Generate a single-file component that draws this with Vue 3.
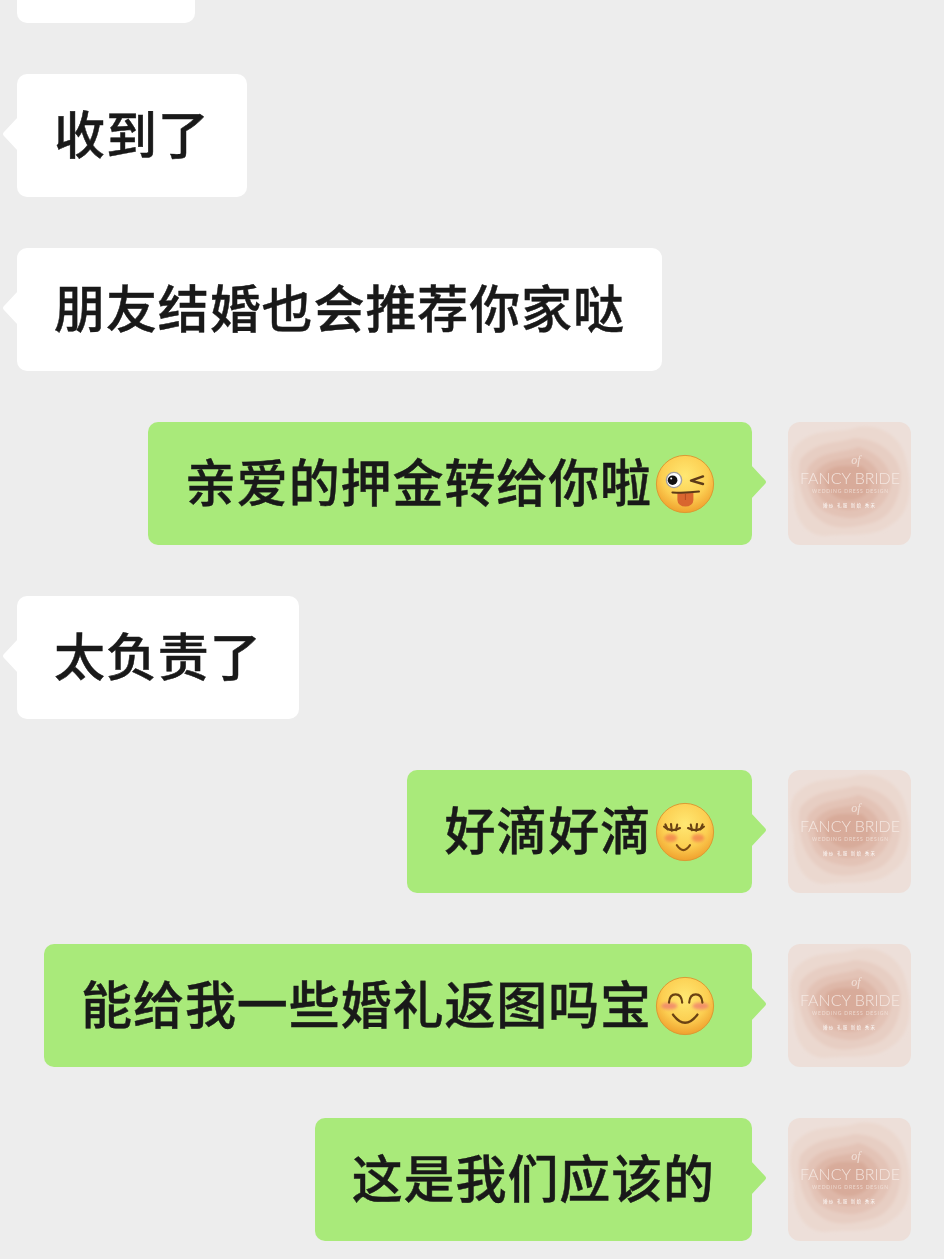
<template>
  <div class="chat">
    <svg class="defs" width="0" height="0" aria-hidden="true">
      <defs>
        <radialGradient id="face" cx="50%" cy="36%" r="66%">
          <stop offset="0%" stop-color="#ffe873" />
          <stop offset="60%" stop-color="#fccf52" />
          <stop offset="100%" stop-color="#ef9d2b" />
        </radialGradient>
        <filter id="soft" x="-20%" y="-20%" width="140%" height="140%">
          <feGaussianBlur stdDeviation="1.800" />
        </filter>
        <filter id="blush" x="-60%" y="-80%" width="220%" height="260%">
          <feGaussianBlur stdDeviation="1.800" />
        </filter>
      </defs>
    </svg>

    <div v-for="msg in messages" :key="msg.id" class="row" :class="msg.mine ? 'row_mine' : 'row_other'">
      <div class="bubble" :class="{ bubble_mine: msg.mine }">
        <span class="bubble-text">{{ msg.text }}</span>
        <svg v-if="msg.emoji" class="emoji" viewBox="0 0 60 60" width="60" height="60">
          <circle cx="30" cy="30" r="28.600" fill="url(#face)" stroke="#dc9a33" stroke-width="1" />

          <g v-if="msg.emoji === 'wink'">
            <circle cx="19" cy="26" r="7.600" fill="#fff" stroke="#a3a0a0" stroke-width="1.400" />
            <circle cx="17.600" cy="26.200" r="4.800" fill="#111" />
            <circle cx="16.200" cy="24.600" r="1" fill="#fff" />
            <path d="M48 22.400 36 26.600 48 30" fill="none" stroke="#5d3a18" stroke-width="2.400" stroke-linecap="round" stroke-linejoin="round" />
            <path d="M22.400 38.400h16v7.600a8 6.600 0 0 1-16 0z" fill="#d9662f" />
            <path d="M30.400 40v6" stroke="#b64a22" stroke-width="1" />
            <path d="M17.400 38.400 Q30 39.200 44 37.600" fill="none" stroke="#5d3a18" stroke-width="2" stroke-linecap="round" />
          </g>

          <g v-else-if="msg.emoji === 'shy'">
            <ellipse cx="15.800" cy="36" rx="6.400" ry="4" fill="#f0704c" opacity=".65" filter="url(#blush)" />
            <ellipse cx="43" cy="36" rx="6.400" ry="4" fill="#f0704c" opacity=".65" filter="url(#blush)" />
            <g fill="none" stroke="#6a4213" stroke-width="2.100" stroke-linecap="round">
              <path d="M9 24.600Q16 31 25 26" />
              <path d="M12.600 27.400 10.400 22.400M16.800 28.600 16 22M21 28.200 22.200 22.600" />
              <path d="M33 26Q42 31 49 24.600" />
              <path d="M37 28.200 35.800 22.600M41.200 28.600 42 22M45.400 27.400 47.600 22.400" />
            </g>
            <path d="M21.800 43.200Q28.400 53 35 43.200" fill="none" stroke="#7a4a12" stroke-width="2.100" stroke-linecap="round" />
          </g>

          <g v-else>
            <ellipse cx="14.200" cy="30" rx="8.200" ry="3.400" fill="#f0806e" opacity=".8" filter="url(#blush)" />
            <ellipse cx="45.600" cy="30" rx="8.200" ry="3.400" fill="#f0806e" opacity=".8" filter="url(#blush)" />
            <g fill="none" stroke="#6a4213" stroke-width="2.200" stroke-linecap="round">
              <path d="M14 26.600Q14.600 18.400 20.600 18.400 26.600 18.400 27.200 26.600" />
              <path d="M34.200 26.600Q34.800 18.400 40.800 18.400 46.800 18.400 47.400 26.600" />
              <path d="M18 38.600Q30 55 42.400 38.600" stroke-width="2.400" />
            </g>
          </g>
        </svg>
      </div>

      <svg v-if="msg.mine" class="avatar" viewBox="0 0 123 123" width="123" height="123">
        <rect width="123" height="123" fill="#eddfd9" />
        <g filter="url(#soft)">
          <path d="M6 26C24 4 50 12 66 6 90 0 114 14 118 38 124 62 124 90 104 102 84 118 58 110 38 114 14 114 4 90 6 66 2 52 0 38 6 26Z" fill="#ebd8cf" />
          <path d="M12 38C28 18 48 22 66 16 88 16 110 30 113 52 113 76 104 95 84 101 64 106 46 109 32 98 14 86 8 58 12 38Z" fill="#e7cec3" />
          <path d="M20 46C32 28 52 32 70 25 90 30 105 46 103 64 98 83 84 94 66 96 48 96 28 90 24 74 19 64 18 54 20 46Z" fill="#e3c3b6" />
          <path d="M28 50C38 36 56 38 72 34 86 40 96 52 92 68 86 82 72 89 58 88 42 86 30 78 28 66 26 60 26 54 28 50Z" fill="#deb7a8" />
          <path d="M38 50C46 42 60 44 74 44 82 50 86 60 80 70 72 78 60 81 50 76 38 70 34 60 38 50Z" fill="#d8ab9a" />
        </g>
        <text x="62" y="61.500" class="logo-main" textLength="100">FANCY BRIDE</text>
        <text x="68" y="42" class="logo-of">of</text>
        <text x="62" y="71" class="logo-sub" textLength="76">WEDDING DRESS DESIGN</text>
        <text x="61" y="85" class="logo-tiny" textLength="52">婚纱 礼服 新娘 秀禾</text>
      </svg>
    </div>
  </div>
</template>

<script setup>
const messages = [
  { id: 1, text: '\u3000\u3000', mine: false },
  { id: 2, text: '收到了', mine: false },
  { id: 3, text: '朋友结婚也会推荐你家哒', mine: false },
  { id: 4, text: '亲爱的押金转给你啦', mine: true, emoji: 'wink' },
  { id: 5, text: '太负责了', mine: false },
  { id: 6, text: '好滴好滴', mine: true, emoji: 'shy' },
  { id: 7, text: '能给我一些婚礼返图吗宝', mine: true, emoji: 'smile' },
  { id: 8, text: '这是我们应该的', mine: true }
]
</script>

<style>
html,
body {
  margin: 0;
  background: #ededed;
}
</style>

<style scoped>
.chat {
  display: flex;
  flex-direction: column;
  gap: 51px;
  width: 944px;
  height: 1259px;
  overflow: hidden;
  background: #ededed;
  font-family: "Noto Sans CJK SC", "Liberation Sans", sans-serif;
}

.defs {
  position: absolute;
}

.row {
  display: flex;
  flex: none;
  align-items: flex-start;
  padding: 0 33px 0 17px;
}

.row:first-of-type {
  margin-top: -100px;
}

.row_mine {
  justify-content: flex-end;
  gap: 36px;
}

.bubble {
  position: relative;
  display: flex;
  align-items: center;
  box-sizing: border-box;
  height: 123px;
  padding: 0 37px;
  border-radius: 10px;
  background: #fff;
  color: #191919;
  font-size: 51px;
  font-weight: 500;
  letter-spacing: .900px;
  line-height: 1;
  white-space: nowrap;
}

.bubble-text {
  padding-bottom: 7px;
  -webkit-text-stroke: .45px #191919;
}

/* little tail on the bubble */
.bubble::before {
  content: '';
  position: absolute;
  top: 43px;
  left: -15px;
  width: 16px;
  height: 34px;
  background: inherit;
  clip-path: path('M16 0L2 15Q0 17 2 19L16 34Z');
}

.bubble_mine {
  background: #a9ea7a;
}

.bubble_mine::before {
  left: auto;
  right: -15px;
  transform: scaleX(-1);
}

.emoji {
  flex: none;
  margin-left: 3px;
}

.avatar {
  flex: none;
  border-radius: 12px;
}

.logo-main,
.logo-sub,
.logo-tiny {
  text-anchor: middle;
  font-family: Lato, "Liberation Sans", sans-serif;
}

.logo-main {
  font-size: 16px;
  font-weight: 300;
  fill: #f8eee9;
  opacity: .85;
}

.logo-of {
  font-family: "Liberation Serif", serif;
  font-size: 12px;
  font-style: italic;
  text-anchor: middle;
  fill: #f6ebe5;
  opacity: .8;
}

.logo-sub {
  font-size: 5px;
  fill: #f6ebe5;
  opacity: .7;
}

.logo-tiny {
  font-family: "Noto Sans CJK SC", sans-serif;
  font-size: 4.500px;
  fill: #fff;
  opacity: .9;
}
</style>
